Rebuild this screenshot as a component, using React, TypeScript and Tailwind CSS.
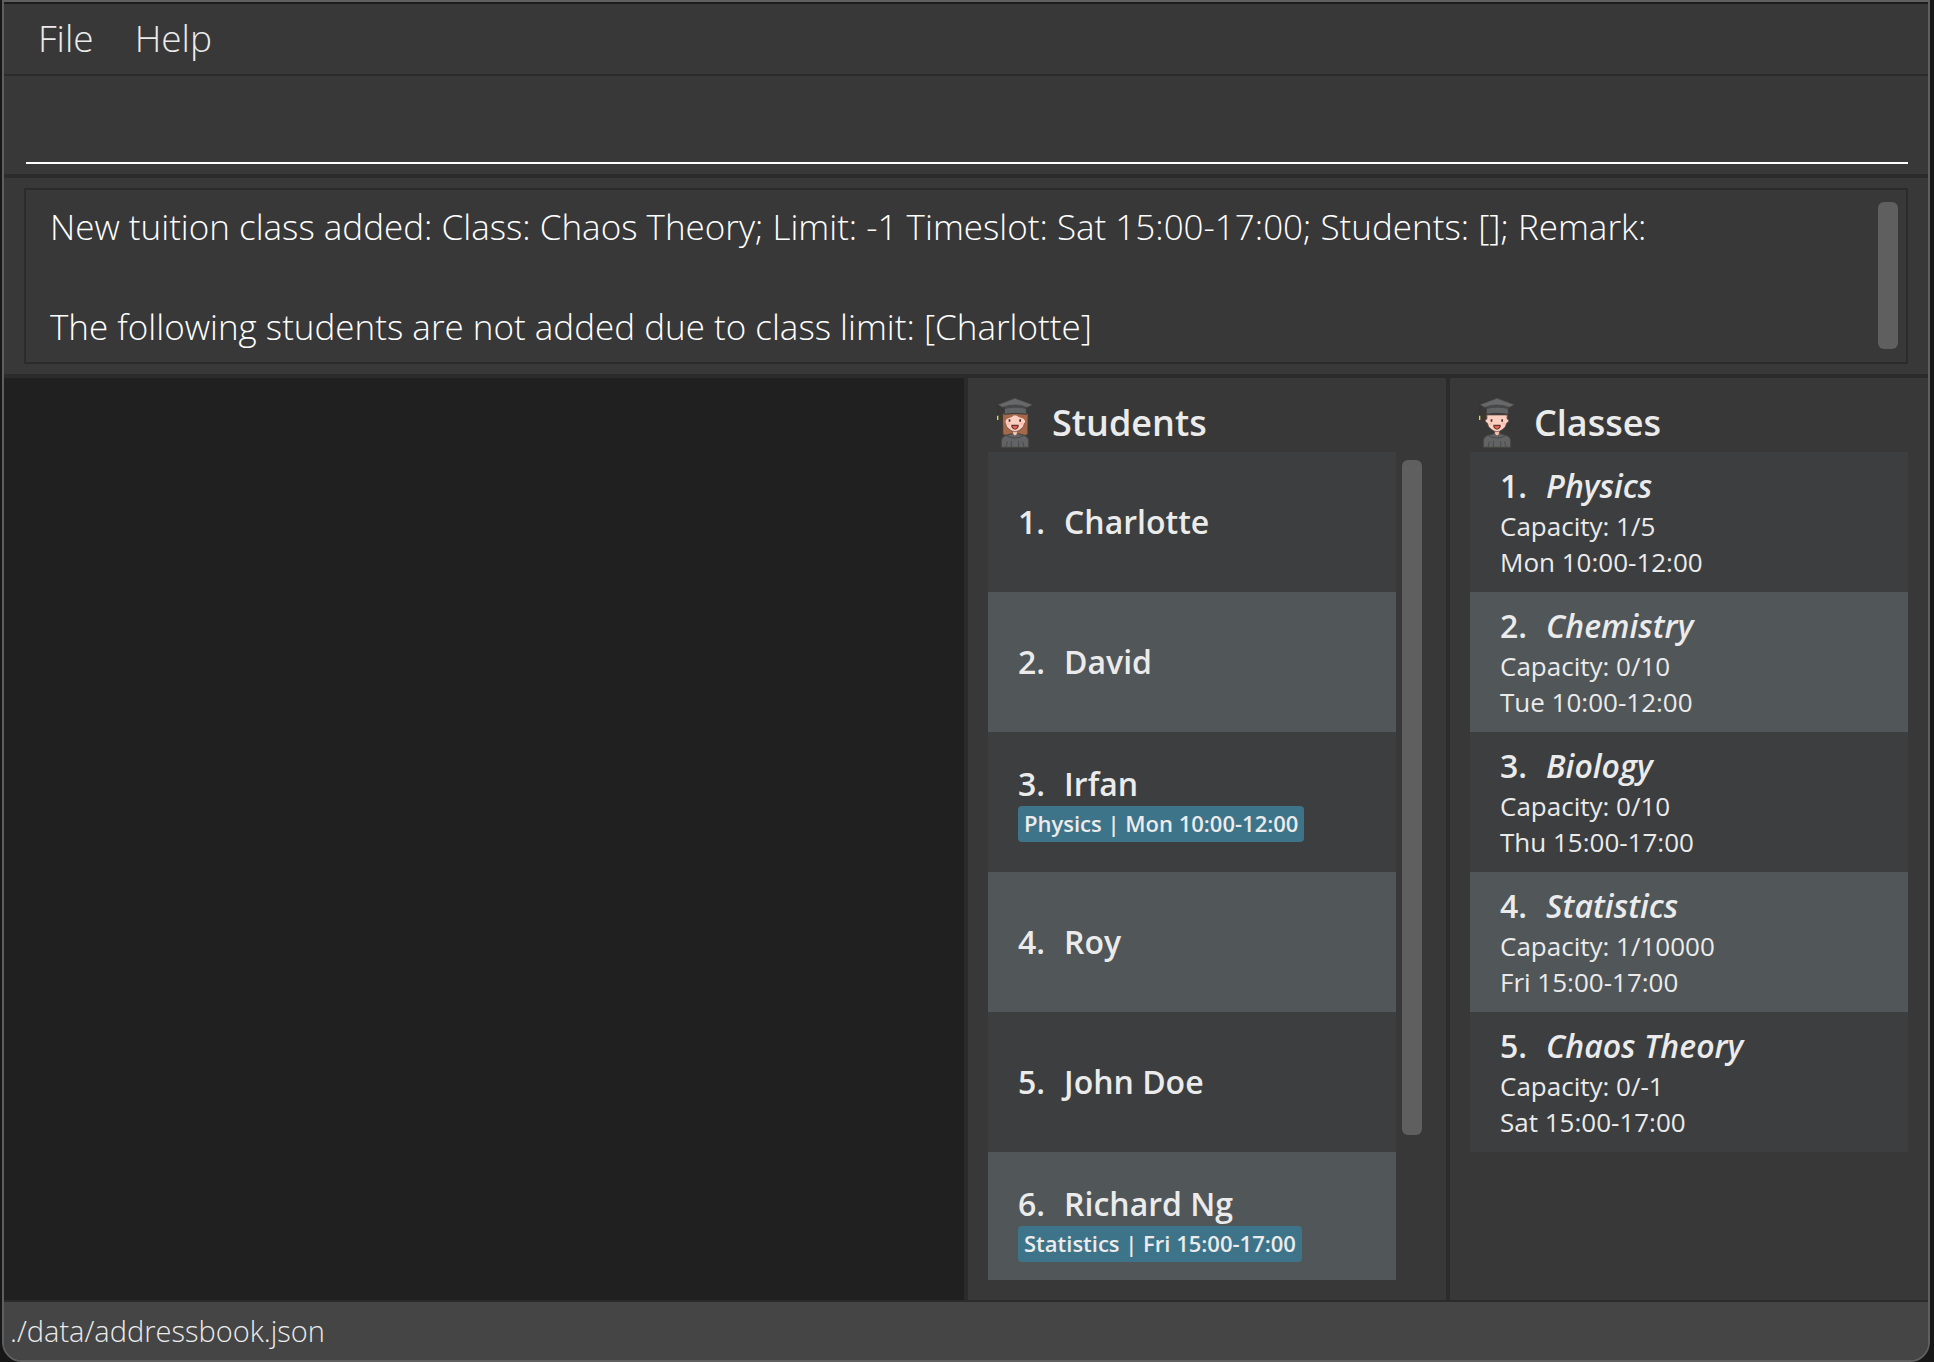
type Student = { name: string; tag?: string };
type TuitionClass = { name: string; capacity: string; slot: string };

const students: Student[] = [
  { name: "Charlotte" },
  { name: "David" },
  { name: "Irfan", tag: "Physics | Mon 10:00-12:00" },
  { name: "Roy" },
  { name: "John Doe" },
  { name: "Richard Ng", tag: "Statistics | Fri 15:00-17:00" },
];

const classes: TuitionClass[] = [
  { name: "Physics", capacity: "1/5", slot: "Mon 10:00-12:00" },
  { name: "Chemistry", capacity: "0/10", slot: "Tue 10:00-12:00" },
  { name: "Biology", capacity: "0/10", slot: "Thu 15:00-17:00" },
  { name: "Statistics", capacity: "1/10000", slot: "Fri 15:00-17:00" },
  { name: "Chaos Theory", capacity: "0/-1", slot: "Sat 15:00-17:00" },
];

const result =
  "New tuition class added: Class: Chaos Theory; Limit: -1 Timeslot: Sat 15:00-17:00; Students: []; Remark:\n\nThe following students are not added due to class limit: [Charlotte]";

function Graduate({ longHair = false }: { longHair?: boolean }) {
  return (
    <svg aria-hidden="true" viewBox="30 27 120 150" className="h-[50px] w-10 shrink-0">
      {longHair && (
        <path d="M54 74h74v62q-9 5-18 1H72q-9 4-18-1z" fill="#a5684a" stroke="#5b4438" strokeWidth="2" />
      )}
      <path d="M49 175v-20q2-14 18-17l14-4h18l14 4q16 3 18 17v20z" fill="#616365" stroke="#47453f" strokeWidth="3" />
      <path d="M67 158l-4 16M79 156v18M101 156v18M113 158l4 16M66 141q24 12 48 0" fill="none" stroke="#454545" strokeWidth="2.5" />
      <path d="M83 122h14v13l-7 6-7-6z" fill="#f7c3b0" stroke="#4c3f39" strokeWidth="1.5" />
      {!longHair && <path d="M57 76h9v15h-7zM114 76h9l-2 15h-7z" fill="#8b5840" />}
      <path
        d="M60 78h60v12q5 0 5 5t-6 7q-2 12-12 19-8 7-17 7t-17-7q-10-7-12-19-6-2-6-7t5-5z"
        fill="#fdcfc0"
        stroke="#5d4841"
        strokeWidth="2"
      />
      {longHair && (
        <path
          d="M55 76h34q-6 9-17 11-8 2-10 8v10l-7 4zM91 76h36v33l-7-4V95q-2-6-10-8-12-2-19-11z"
          fill="#a5684a"
        />
      )}
      <path d="M71 91h5v7h-5zM103 91h5v7h-5z" fill="#352f2e" />
      <path d="M67 101h8v6h-8zM106 101h8v6h-8z" fill="#ffb9ae" />
      <path d="M79 107h22v7q-5 8-11 8t-11-8z" fill="#5b3633" />
      <path d="M82 111h16q-3 9-8 9t-8-9z" fill="#f0604f" />
      <path d="M58 52h66v24q-33-6-66 0z" fill="#606264" stroke="#3b3b3a" strokeWidth="3" />
      <path d="M59 53q31-9 64 0v7q-32-8-64 0z" fill="#464849" />
      <path d="M39 47l51-19 52 19-15 8q-37-14-74 0z" fill="#66686b" stroke="#484843" strokeWidth="2" />
      <path d="M39 48v32" stroke="#3b3323" strokeWidth="3" />
      <path d="M36 80h4v13h-4z" fill="#f5d90f" />
    </svg>
  );
}

function Heading({ title, longHair }: { title: string; longHair?: boolean }) {
  return (
    <h2 className="flex h-[54px] shrink-0 items-center gap-[17px] pb-1 pl-[7px] text-[36px] leading-[50px] font-semibold">
      <Graduate longHair={longHair} />
      {title}
    </h2>
  );
}

function Row({ index, children }: { index: number; children: React.ReactNode }) {
  return (
    <li
      className={`flex h-[140px] shrink-0 flex-col items-start justify-center px-[30px] ${
        index % 2 === 0 ? "bg-[#3c3e3f]" : "bg-[#515658]"
      }`}
    >
      {children}
    </li>
  );
}

export default function App() {
  return (
    <div className="h-screen overflow-hidden bg-[#171717] pr-1 pl-[2px] font-['Open_Sans',sans-serif] text-[#ebebeb]">
      <div className="flex h-full flex-col overflow-hidden rounded-b-[20px] border-2 border-[#5f5f5f] bg-[#383838]">
        <nav className="flex h-[74px] shrink-0 items-center gap-[41px] border-t-2 border-b-2 border-t-[#1c1c1c] border-b-[#2b2b2b] px-[34px] pb-[2px] text-[37px] font-light">
          <button type="button">File</button>
          <button type="button">Help</button>
        </nav>

        <div className="h-[102px] shrink-0 border-b-4 border-[#2b2b2b] px-5 pb-[10px] pl-[22px]">
          <input
            type="text"
            aria-label="Command"
            className="block h-[88px] w-full border-b-2 border-white bg-transparent text-[35px] font-light text-white outline-none"
          />
        </div>

        <div className="h-[200px] shrink-0 border-b-4 border-[#2b2b2b] px-5 py-[10px]">
          <div className="flex h-[176px] border-2 border-[#2b2b2b] pt-3 pr-2 pb-3 pl-6">
            <textarea
              readOnly
              aria-label="Result"
              value={result}
              className="h-[150px] min-w-0 grow resize-none overflow-hidden bg-transparent text-[35px] leading-[50px] font-light text-white outline-none"
            />
            <div className="h-[147px] w-5 shrink-0 rounded-md bg-[#5f5f5f]" />
          </div>
        </div>

        <main className="grid min-h-0 grow grid-cols-[960fr_4px_478fr_4px_478fr] border-b-2 border-[#2b2b2b]">
          <div className="bg-[#202020]" />
          <div className="bg-[#2b2b2b]" />
          <section className="flex min-h-0 flex-col px-5 pt-5 pb-5">
            <Heading title="Students" longHair />
            <div className="flex min-h-0 grow gap-[6px]">
              <ol className="flex min-w-0 grow flex-col overflow-hidden">
                {students.map((s, i) => (
                  <Row key={s.name} index={i}>
                    <div className="flex gap-[19px] text-[32px] leading-[44px] font-semibold">
                      <span>{i + 1}.</span>
                      <span>{s.name}</span>
                    </div>
                    {s.tag && (
                      <span className="rounded-[4px] bg-[#3e7489] px-[6px] pb-[2px] text-[22px] leading-[34px] font-semibold whitespace-nowrap">
                        {s.tag}
                      </span>
                    )}
                  </Row>
                ))}
              </ol>
              <div className="mt-2 mr-1 mb-[145px] w-5 shrink-0 rounded-md bg-[#5f5f5f]" />
            </div>
          </section>
          <div className="bg-[#2b2b2b]" />
          <section className="flex min-h-0 flex-col px-5 pt-5 pb-5">
            <Heading title="Classes" />
            <ol className="flex min-h-0 grow flex-col overflow-hidden">
              {classes.map((c, i) => (
                <Row key={c.name} index={i}>
                  <div className="flex gap-[19px] text-[32px] leading-[44px] font-semibold">
                    <span>{i + 1}.</span>
                    <span className="italic">{c.name}</span>
                  </div>
                  <p className="text-[26px] leading-9">Capacity: {c.capacity}</p>
                  <p className="text-[26px] leading-9">{c.slot}</p>
                </Row>
              ))}
            </ol>
          </section>
        </main>

        <footer className="flex h-[58px] shrink-0 items-center bg-[#454545] px-[6px] text-[29px] font-light">
          ./data/addressbook.json
        </footer>
      </div>
    </div>
  );
}
